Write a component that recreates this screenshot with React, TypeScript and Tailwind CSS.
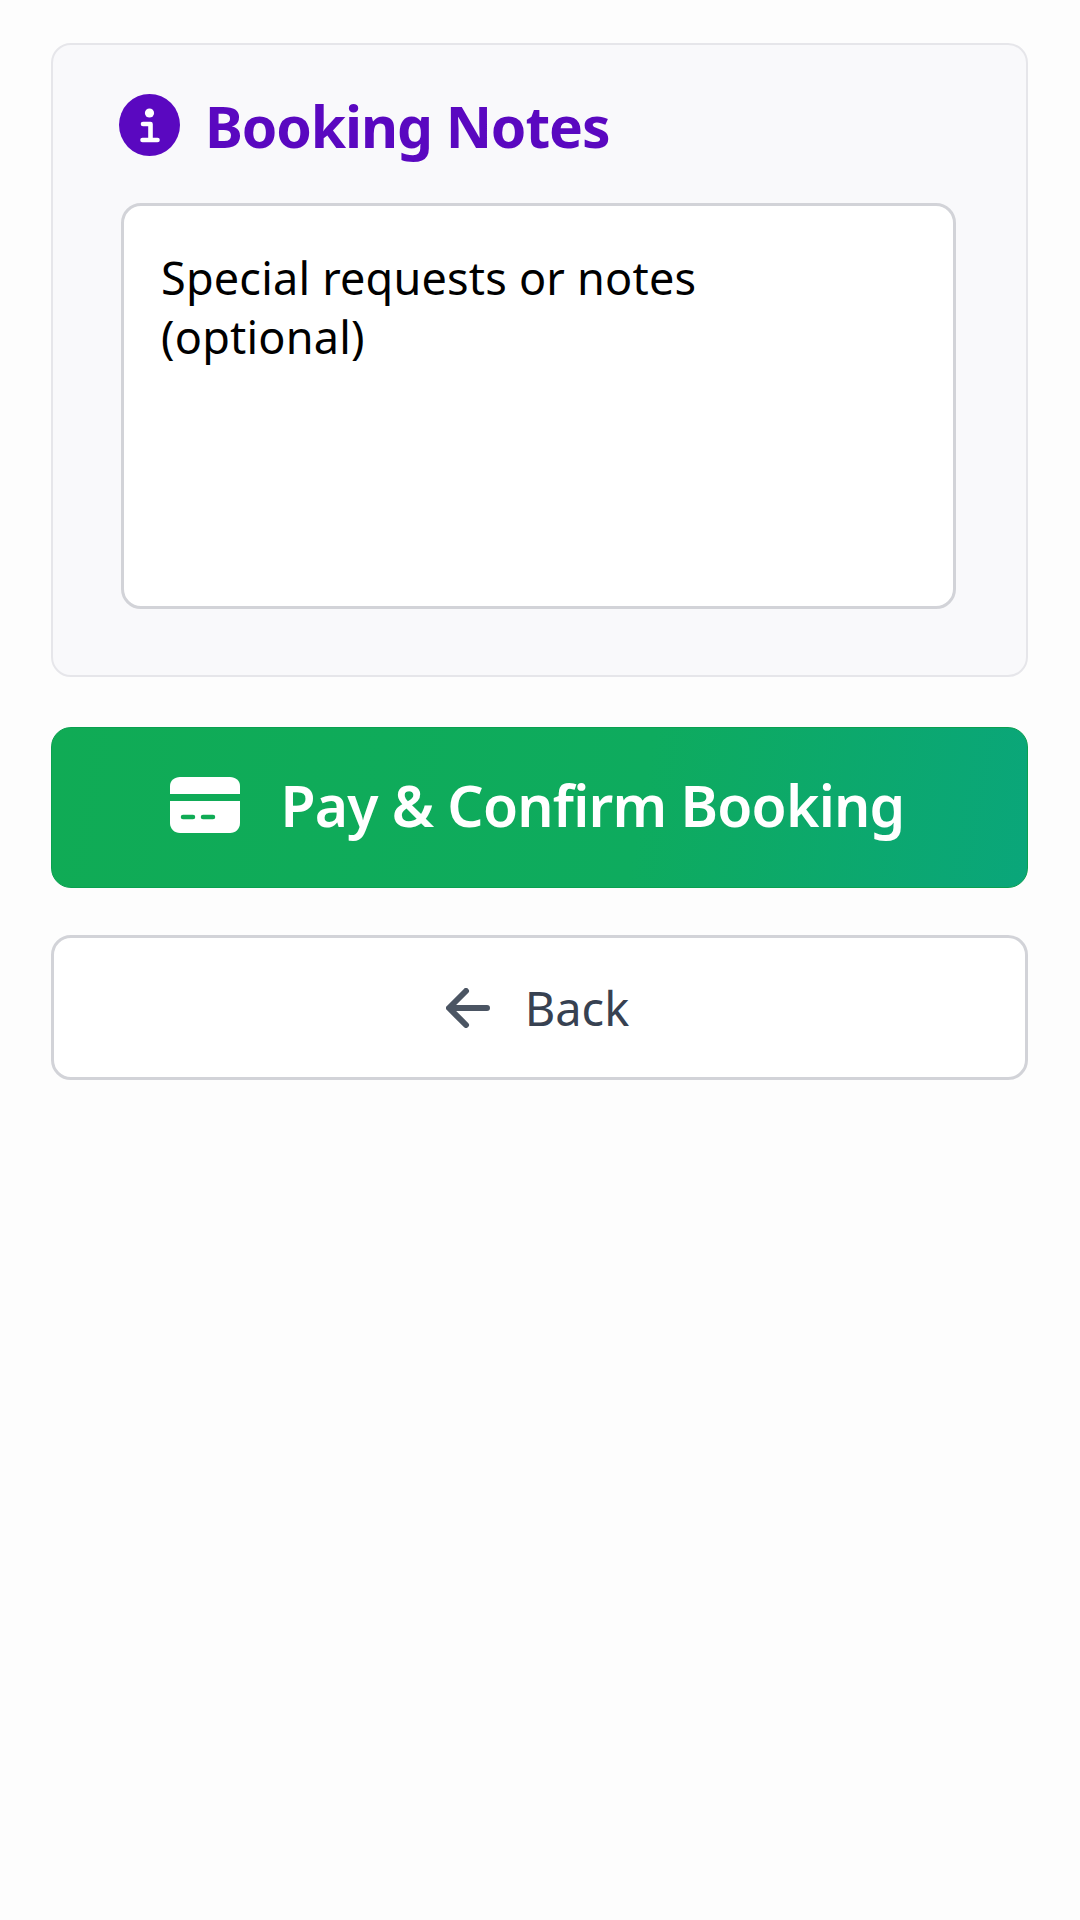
export default function App() {
  return (
    <div className="min-h-[1920px] w-[1080px] bg-[#fdfdfd] pt-[43px] pl-[51px] pr-[52px] flex flex-col font-['Noto_Sans',sans-serif]">
      <div className="h-[634px] rounded-[20px] border-2 border-[#e6e6ea] bg-[#f9f9fb] pl-[68px] pr-[70px] pt-[49px]">
        <div className="flex items-center gap-[25px] -ml-[2px] h-[62px]">
          <svg width="61" height="62" viewBox="0 0 61 62" className="shrink-0">
            <ellipse cx="30.5" cy="31" rx="30.5" ry="31" fill="#5a08c0" />
            <circle cx="30.5" cy="19" r="4.6" fill="#fff" />
            <path d="M24 30H31.5V45.5M23.5 46H38.5" stroke="#fff" strokeWidth="4.6" strokeLinecap="round" strokeLinejoin="round" fill="none" />
          </svg>
          <h2 className="text-[57px] leading-[62px] pt-[2px] font-bold text-[#5a08c0] tracking-[-1.1px]">Booking Notes</h2>
        </div>
        <div className="mt-[47px] h-[406px] rounded-[20px] border-[3px] border-[#d2d3d8] bg-white pl-[37px] pt-[42px] text-[45px] leading-[59px] tracking-[0.2px] text-black">
          Special requests or notes
          <br />
          (optional)
        </div>
      </div>
      <button className="mt-[50px] h-[161px] rounded-[20px] border border-[#0aa050] bg-[linear-gradient(100deg,#10ab55_0%,#0eab5e_60%,#0aa67a_100%)] flex items-center justify-center gap-[41px] pb-[6px] pr-[5px] text-white">
        <svg width="70" height="58" viewBox="0 0 70 58" className="shrink-0">
          <path d="M0 18V10C0 4.5 4.5 1 10 1H60C65.5 1 70 4.5 70 10V18Z" fill="#fff" />
          <path d="M0 25H70V47C70 53 65.5 57 60 57H10C4.5 57 0 53 0 47Z" fill="#fff" />
          <path d="M13 41H23M33 41H43" stroke="#10ab55" strokeWidth="4.5" strokeLinecap="round" fill="none" />
        </svg>
        <span className="text-[57px] leading-[72px] font-semibold tracking-[-0.8px]">Pay &amp; Confirm Booking</span>
      </button>
      <button className="mt-[47px] h-[145px] rounded-[20px] border-[3px] border-[#d2d3d8] bg-white flex items-center justify-center gap-[35px] pr-[4px] text-[#374151]">
        <svg width="44" height="40" viewBox="0 0 44 40" className="shrink-0">
          <path d="M41 20H5M20 3L3 20L20 37" stroke="#4b5563" strokeWidth="6" strokeLinecap="round" strokeLinejoin="round" fill="none" />
        </svg>
        <span className="text-[47px] leading-[64px]">Back</span>
      </button>
    </div>
  );
}
